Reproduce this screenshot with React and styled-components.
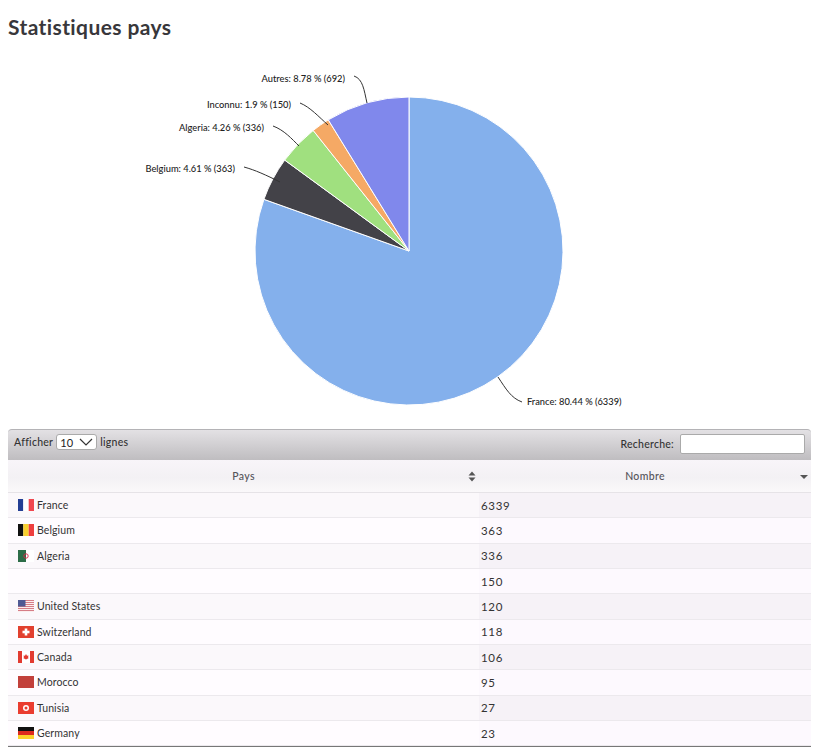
import React from "react";
import styled, { createGlobalStyle } from "styled-components";

const Global = createGlobalStyle`
  html, body { margin: 0; padding: 0; background: #fff; }
  body { font-family: "Lato", "Noto Sans", sans-serif; color: #333; overflow: hidden; }
`;
const Page = styled.div`
  width: 820px; height: 747px; padding: 0 9px 0 8px; box-sizing: border-box; overflow: hidden;
`;
const Title = styled.h1`
  margin: 0; height: 57px; padding-top: 13px; box-sizing: border-box;
  font: 700 21px/28px "Lato", sans-serif; color: #38373b; letter-spacing: 0.4px;
`;
const Chart = styled.svg`
  display: block; width: 803px; height: 372px;
`;
const Label = styled.text`
  font: 500 9.3px "Lato", sans-serif; fill: #222; letter-spacing: 0;
`;
const Table = styled.div`
  border-bottom: 1px solid #777;
`;
const Toolbar = styled.div`
  height: 31px; display: flex; align-items: flex-start; justify-content: space-between;
  padding: 4px 6px 0; box-sizing: border-box; border-radius: 4px 4px 0 0;
  border-top: 1px solid #b4b3b6;
  background: linear-gradient(#e3e1e4, #bfbdc0);
  font: 500 10.5px "Lato", sans-serif; color: #333; letter-spacing: 0.25px;
`;
const Group = styled.label`
  display: flex; align-items: center; gap: 3px;
`;
const PageSize = styled.div`
  width: 41px; height: 16px; background: #fff; border: 1px solid #aaa; border-radius: 3px;
  box-sizing: border-box; display: flex; align-items: center; justify-content: space-between;
  padding: 0 3px 0 3px; font: 400 11px "Lato", sans-serif; color: #222;
`;
const Search = styled.div`
  width: 125px; height: 20px; background: #fff; border: 1px solid #aaa; border-radius: 2px;
  box-sizing: border-box; margin-left: 3px;
`;
const Grid = styled.div`
  display: grid; grid-template-columns: 471px 1fr;
`;
const Head = styled.div`
  height: 33px; display: flex; align-items: center; justify-content: center; position: relative;
  background: linear-gradient(#f8f5f9, #f3f1f4 55%, #faf8fa); border-bottom: 1px solid #e6e3e7;
  box-sizing: border-box; font: 500 10.5px "Lato", sans-serif; color: #55545a; letter-spacing: 0.35px;
`;
const SortIcon = styled.svg`
  position: absolute; right: 3px; top: 11px; width: 8px; height: 11px;
`;
const Cell = styled.div`
  height: 25.33px; display: flex; align-items: center; box-sizing: border-box;
  padding-left: ${p => (p.$num ? "2px" : "10px")}; gap: 3px;
  background: ${p => (p.$odd ? (p.$num ? "#f6f2f7" : "#fbf8fb") : (p.$num ? "#fdf9fe" : "#fffcff"))};
  border-bottom: 1px solid #ece9ed;
  font: 400 ${p => (p.$num ? "11.5px" : "10.5px")} "Lato", sans-serif; color: #333;
  letter-spacing: ${p => (p.$num ? "0.7px" : "0.1px")};
`;
const FlagSvg = styled.svg`
  width: 16px; height: 12px; flex: none; display: block;
`;

const flags = {
  fr: <><rect width="5.3" height="12" fill="#243f94" /><rect x="5.3" width="5.4" height="12" fill="#fff" /><rect x="10.7" width="5.3" height="12" fill="#f0474f" /></>,
  be: <><rect width="5.3" height="12" fill="#111" /><rect x="5.3" width="5.4" height="12" fill="#f7d02f" /><rect x="10.7" width="5.3" height="12" fill="#ee3f3f" /></>,
  dz: <><rect width="8" height="12" fill="#2c6c47" /><rect x="8" width="8" height="12" fill="#fff" /><circle cx="8" cy="6" r="2.2" fill="none" stroke="#d24" strokeWidth="0.9" /></>,
  us: <><rect width="16" height="12" fill="#fbeeee" />{[0, 2, 4, 6, 8, 10].map(y => <rect key={y} y={y} width="16" height="1" fill="#d67d86" />)}<rect width="7.5" height="6.5" fill="#4f5a94" /></>,
  ch: <><rect width="16" height="12" fill="#e2402f" /><rect x="6.7" y="2.5" width="2.6" height="7" fill="#fff" /><rect x="4.5" y="4.7" width="7" height="2.6" fill="#fff" /></>,
  ca: <><rect width="16" height="12" fill="#fff" /><rect width="4" height="12" fill="#e23b30" /><rect x="12" width="4" height="12" fill="#e23b30" /><path d="M8 3l1 1.8 1.5-.4-.5 2 .9.5L8 8.6 5.1 6.9l.9-.5-.5-2 1.5.4z" fill="#e23b30" /></>,
  ma: <><rect width="16" height="12" fill="#c2403b" /></>,
  tn: <><rect width="16" height="12" fill="#ea3d2f" /><circle cx="8" cy="6" r="3" fill="#fff" /><circle cx="8" cy="6" r="1.5" fill="#ea3d2f" /></>,
  de: <><rect width="16" height="4" fill="#111" /><rect y="4" width="16" height="4" fill="#dd2a1e" /><rect y="8" width="16" height="4" fill="#fbd22c" /></>,
};

const Flag = ({ code }) => <FlagSvg viewBox="0 0 16 12">{flags[code]}</FlagSvg>;

const rows = [
  ["fr", "France", 6339], ["be", "Belgium", 363], ["dz", "Algeria", 336], [null, "", 150],
  ["us", "United States", 120], ["ch", "Switzerland", 118], ["ca", "Canada", 106],
  ["ma", "Morocco", 95], ["tn", "Tunisia", 27], ["de", "Germany", 23],
];

const CX = 401, CY = 194, R = 154;
const pt = (deg, r = R) => {
  const a = (deg - 90) * Math.PI / 180;
  return [CX + r * Math.cos(a), CY + r * Math.sin(a)];
};
const total = 7880;
const slices = [
  { v: 6339, c: "#84b0ec" }, { v: 363, c: "#434248" }, { v: 336, c: "#a0e07f" },
  { v: 150, c: "#f5a965" }, { v: 692, c: "#8088ec" },
];
let acc = 0;
const arcs = slices.map(s => {
  const start = acc; acc += s.v / total * 360;
  const [x1, y1] = pt(start); const [x2, y2] = pt(acc);
  return { ...s, d: `M${CX} ${CY}L${x1} ${y1}A${R} ${R} 0 ${acc - start > 180 ? 1 : 0} 1 ${x2} ${y2}Z` };
});

const labels = [
  { t: "France: 80.44 % (6339)", x: 519, y: 348, a: "start", d: "M490 320C498 332 503 341 514 345" },
  { t: "Belgium: 4.61 % (363)", x: 227, y: 115, a: "end", d: "M236 110C247 113 258 118 272 125" },
  { t: "Algeria: 4.26 % (336)", x: 256, y: 74, a: "end", d: "M265 69C276 73 284 82 291 89" },
  { t: "Inconnu: 1.9 % (150)", x: 283, y: 51, a: "end", d: "M292 46C302 50 311 60 320 68" },
  { t: "Autres: 8.78 % (692)", x: 337, y: 25, a: "end", d: "M346 19C355 22 356 33 359 46" },
];

export default function App() {
  return (
    <Page>
      <Global />
      <Title>Statistiques pays</Title>
      <Chart viewBox="0 0 803 372">
        {arcs.map(a => <path key={a.c} d={a.d} fill={a.c} stroke="#fff" strokeWidth="1" strokeLinejoin="round" />)}
        {labels.map(l => (
          <g key={l.t}>
            <path d={l.d} fill="none" stroke="#333" strokeWidth="1" />
            <Label x={l.x} y={l.y} textAnchor={l.a}>{l.t}</Label>
          </g>
        ))}
      </Chart>
      <Table>
        <Toolbar>
          <Group>Afficher
            <PageSize>10
              <svg width="14" height="8" viewBox="0 0 14 8"><path d="M1 1l6 6 6-6" fill="none" stroke="#333" strokeWidth="1.2" /></svg>
            </PageSize> lignes</Group>
          <Group>Recherche:<Search /></Group>
        </Toolbar>
        <Grid>
          <Head>Pays
            <SortIcon viewBox="0 0 8 11"><path d="M0.5 4.5L4 0.5l3.5 4zM0.5 6.5L4 10.5l3.5-4z" fill="#555" /></SortIcon>
          </Head>
          <Head>Nombre
            <SortIcon viewBox="0 0 8 11"><path d="M0 4h8L4 8z" fill="#555" /></SortIcon>
          </Head>
          {rows.map((r, i) => (
            <React.Fragment key={r[2]}>
              <Cell $odd={i % 2 === 0}>{r[0] && <Flag code={r[0]} />}{r[1]}</Cell>
              <Cell $odd={i % 2 === 0} $num>{r[2]}</Cell>
            </React.Fragment>
          ))}
        </Grid>
      </Table>
    </Page>
  );
}
